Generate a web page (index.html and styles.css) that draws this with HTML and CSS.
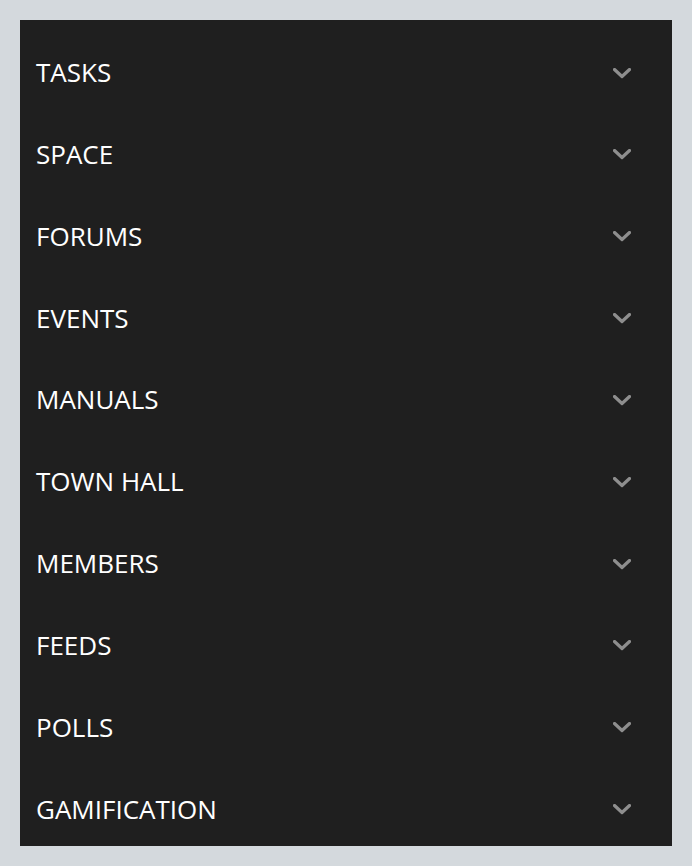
FILE: index.html
```html
<!DOCTYPE html>
<html lang="en">
<head>
<meta charset="utf-8">
<link rel="stylesheet" href="styles.css">
</head>
<body>
<nav class="panel">
  <div class="row"><span class="label">TASKS</span><svg class="chev" viewBox="0 0 18 11"><path d="M1.5 1.5 L9 8.5 L16.5 1.5"/></svg></div>
  <div class="row"><span class="label">SPACE</span><svg class="chev" viewBox="0 0 18 11"><path d="M1.5 1.5 L9 8.5 L16.5 1.5"/></svg></div>
  <div class="row"><span class="label">FORUMS</span><svg class="chev" viewBox="0 0 18 11"><path d="M1.5 1.5 L9 8.5 L16.5 1.5"/></svg></div>
  <div class="row"><span class="label">EVENTS</span><svg class="chev" viewBox="0 0 18 11"><path d="M1.5 1.5 L9 8.5 L16.5 1.5"/></svg></div>
  <div class="row"><span class="label">MANUALS</span><svg class="chev" viewBox="0 0 18 11"><path d="M1.5 1.5 L9 8.5 L16.5 1.5"/></svg></div>
  <div class="row"><span class="label">TOWN HALL</span><svg class="chev" viewBox="0 0 18 11"><path d="M1.5 1.5 L9 8.5 L16.5 1.5"/></svg></div>
  <div class="row"><span class="label">MEMBERS</span><svg class="chev" viewBox="0 0 18 11"><path d="M1.5 1.5 L9 8.5 L16.5 1.5"/></svg></div>
  <div class="row"><span class="label">FEEDS</span><svg class="chev" viewBox="0 0 18 11"><path d="M1.5 1.5 L9 8.5 L16.5 1.5"/></svg></div>
  <div class="row"><span class="label">POLLS</span><svg class="chev" viewBox="0 0 18 11"><path d="M1.5 1.5 L9 8.5 L16.5 1.5"/></svg></div>
  <div class="row"><span class="label">GAMIFICATION</span><svg class="chev" viewBox="0 0 18 11"><path d="M1.5 1.5 L9 8.5 L16.5 1.5"/></svg></div>
</nav>
</body>
</html>
```
FILE: styles.css
```css
html, body {
  margin: 0;
  padding: 0;
  background: #d4d9dd;
}
body {
  padding: 20px;
  font-family: "Open Sans", "Noto Sans", sans-serif;
}
.panel {
  background: #1f1f1f;
  height: 826px;
  box-sizing: border-box;
  padding: 30px 41px 14px 16px;
  display: flex;
  flex-direction: column;
  gap: 37.85px;
}
.row {
  height: 44px;
  display: flex;
  align-items: center;
  justify-content: space-between;
}
.label {
  color: #ffffff;
  font-size: 26px;
  line-height: 44px;
}
.chev {
  width: 18px;
  height: 11px;
  margin-top: 2px;
  fill: none;
  stroke: #8e8e8e;
  stroke-width: 3.2;
  stroke-linecap: round;
  stroke-linejoin: round;
}
```
